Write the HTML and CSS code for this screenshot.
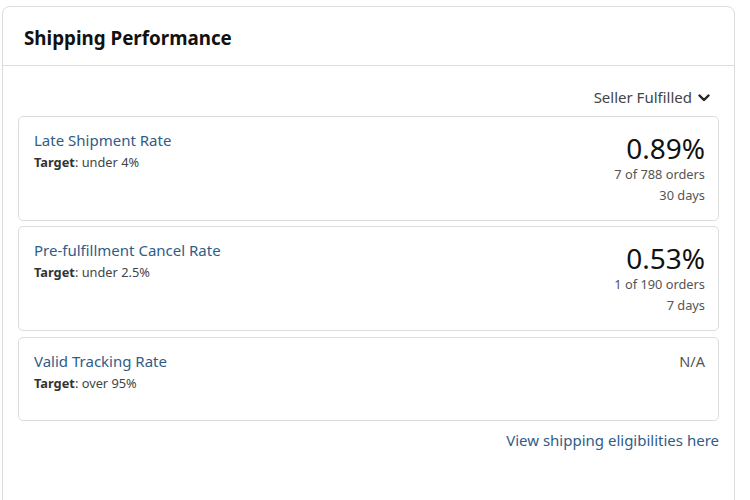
FILE: index.html
```html
<!DOCTYPE html>
<html>
<head>
<meta charset="utf-8">
<link rel="stylesheet" href="styles.css">
</head>
<body>
<div class="panel">
  <div class="panel-head">Shipping Performance</div>
  <div class="panel-body">
    <div class="filter">Seller Fulfilled
      <svg class="chev" width="12" height="8" viewBox="0 0 12 8"><path d="M1.5 1.5 L6 6 L10.5 1.5" fill="none" stroke="#222" stroke-width="2.4" stroke-linecap="round" stroke-linejoin="round"/></svg>
    </div>
    <div class="metric">
      <div class="m-left">
        <div class="m-title">Late Shipment Rate</div>
        <div class="m-target"><b>Target</b>: under 4%</div>
      </div>
      <div class="m-right">
        <div class="m-value">0.89%</div>
        <div class="m-sub">7 of 788 orders</div>
        <div class="m-sub">30 days</div>
      </div>
    </div>
    <div class="metric">
      <div class="m-left">
        <div class="m-title">Pre-fulfillment Cancel Rate</div>
        <div class="m-target"><b>Target</b>: under 2.5%</div>
      </div>
      <div class="m-right">
        <div class="m-value">0.53%</div>
        <div class="m-sub">1 of 190 orders</div>
        <div class="m-sub">7 days</div>
      </div>
    </div>
    <div class="metric short">
      <div class="m-left">
        <div class="m-title">Valid Tracking Rate</div>
        <div class="m-target"><b>Target</b>: over 95%</div>
      </div>
      <div class="m-right">
        <div class="m-na">N/A</div>
      </div>
    </div>
    <div class="link-row"><a class="link">View shipping eligibilities here</a></div>
  </div>
</div>
</body>
</html>
```
FILE: styles.css
```css
html, body { margin: 0; padding: 0; background: #fff; }
body {
  font-family: "Noto Sans", "Open Sans", sans-serif;
  color: #333;
  padding: 6px 15px 0 2px;
  height: 500px;
  box-sizing: border-box;
  overflow: hidden;
}
.panel {
  border: 1px solid #dcdcdc;
  border-radius: 8px;
  height: 560px;
}
.panel-head {
  height: 59px;
  box-sizing: border-box;
  border-bottom: 1px solid #dcdcdc;
  padding: 18px 0 0 21px;
  font-size: 18.8px;
  font-weight: 700;
  color: #111;
  line-height: 26px;
}
.panel-body {
  padding: 21px 15px 0 15px;
  display: flex;
  flex-direction: column;
  gap: 5.5px;
}
.filter {
  align-self: flex-end;
  display: flex;
  align-items: center;
  gap: 6px;
  font-size: 15px;
  color: #444;
  margin-right: 9px;
  margin-bottom: 3px;
  line-height: 20px;
}
.chev { margin-top: 2px; }
.metric {
  border: 1px solid #dcdcdc;
  border-radius: 5px;
  height: 105px;
  box-sizing: border-box;
  padding: 13px 13px 0 15px;
  display: flex;
  justify-content: space-between;
}
.metric.short { height: 84px; }
.m-title {
  font-size: 15px;
  color: #2f5c88;
  line-height: 20px;
}
.m-target {
  font-size: 12.8px;
  color: #444;
  margin-top: 4px;
  line-height: 16px;
}
.m-target b { color: #333; }
.m-right { text-align: right; }
.m-value {
  font-size: 28px;
  color: #111;
  line-height: 32px;
  margin-top: 2px;
}
.m-sub {
  font-size: 12.8px;
  color: #555;
  line-height: 21px;
}
.m-na {
  font-size: 14.5px;
  color: #555;
  line-height: 20px;
}
.link-row {
  text-align: right;
  margin-top: 3px;
}
.link {
  font-size: 15px;
  color: #2f5c88;
  line-height: 20px;
}
```
